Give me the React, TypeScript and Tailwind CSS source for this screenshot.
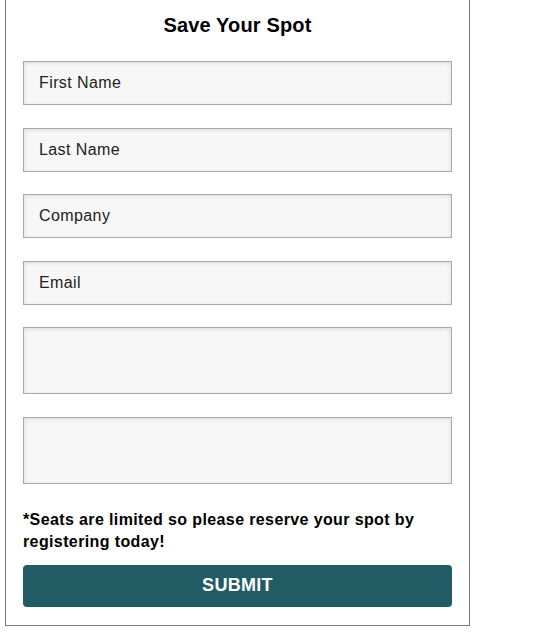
import React from 'react';

const fieldClass =
  'w-full border border-[#a9a9a9] bg-[#f7f7f7] px-[15px] text-[16px] tracking-[0.4px] text-[#222] placeholder:text-[#222] shadow-[inset_0_1px_4px_rgba(0,0,0,0.12)] outline-none';

export default function App() {
  return (
    <div className="min-h-screen bg-white" style={{ fontFamily: '"Liberation Sans", Arial, sans-serif' }}>
      <div className="ml-[5px] w-[465px] border-x border-b border-[#7a7a7a] px-[17px] pt-[11px] pb-[18px]">
        <h2 className="text-center text-[20px] font-bold leading-[28px] tracking-[0.15px] text-black">Save Your Spot</h2>

        <form className="mt-[22px] flex flex-col gap-[22.5px]" onSubmit={(e) => e.preventDefault()}>
          <input type="text" placeholder="First Name" className={`${fieldClass} h-[44px]`} />
          <input type="text" placeholder="Last Name" className={`${fieldClass} h-[44px]`} />
          <input type="text" placeholder="Company" className={`${fieldClass} h-[44px]`} />
          <input type="email" placeholder="Email" className={`${fieldClass} h-[44px]`} />
          <textarea className={`${fieldClass} block h-[67px] resize-none`} />
          <textarea className={`${fieldClass} block h-[67px] resize-none`} />
        </form>

        <p className="mt-[25px] text-[16px] font-bold leading-[22px] tracking-[0.38px] text-black">
          *Seats are limited so please reserve your spot by registering today!
        </p>

        <button
          type="button"
          className="mt-[12px] h-[42px] w-full rounded-[4px] bg-[#215c65] text-[18px] font-bold tracking-[0.3px] text-white"
        >
          SUBMIT
        </button>
      </div>
    </div>
  );
}
